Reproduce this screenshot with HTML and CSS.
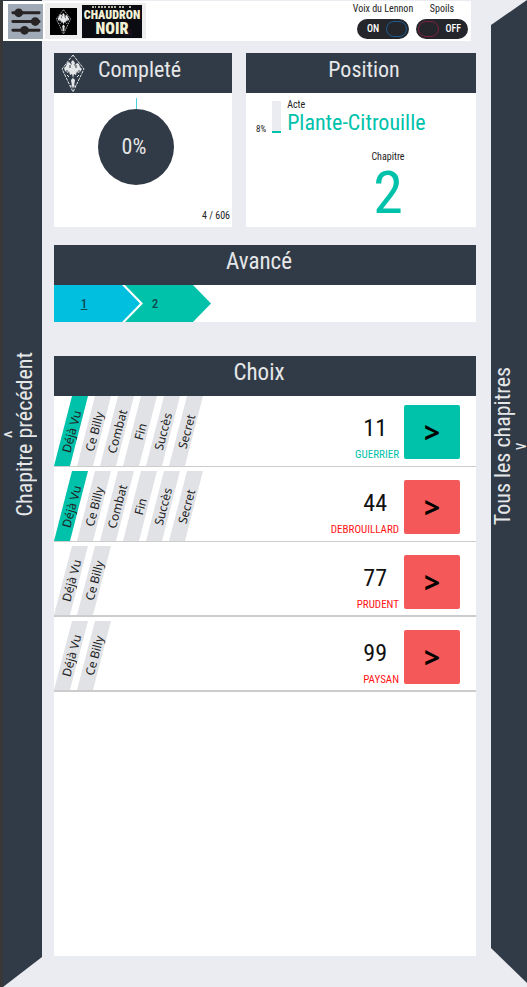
FILE: index.html
```html
<!DOCTYPE html>
<html lang="fr">
<head>
<meta charset="utf-8">
<meta name="viewport" content="width=device-width, initial-scale=1">
<title>Le Chaudron Noir</title>
<link rel="stylesheet" href="styles.css">
</head>
<body>
<div class="page">
  <header class="toolbar">
    <button class="settings" type="button" aria-label="Options">
      <svg viewBox="0 0 36 36" width="35" height="35" aria-hidden="true">
        <g stroke="#282425" stroke-width="3" stroke-linecap="round">
          <path d="M5 9H32M5 18H32M5 27H32"/>
        </g>
        <g fill="#282425"><circle cx="11" cy="9" r="4.5"/><circle cx="28" cy="18" r="4.5"/><circle cx="17" cy="27" r="4.5"/></g>
      </svg>
    </button>
    <div class="books">
      <a href="#dragon" aria-label="Dragon">
        <svg viewBox="0 0 27 27" width="27" height="27" aria-hidden="true">
          <rect width="27" height="27" fill="#000"/>
          <use href="#emblem" x="5" y="0" width="17" height="27"/>
        </svg>
      </a>
      <a class="cover" href="#chaudron">
        <svg viewBox="0 0 60 33" width="60" height="33">
          <rect width="60" height="33" fill="#0b0b12"/>
          <path d="M42 24h8v7h-8z" fill="#17101c"/>
          <path d="M10 2h4m2 0h8m2 0h9m2 0h6m4 0h3" fill="none" stroke="#f3f1d5" stroke-width="1.5" stroke-dasharray="2 1"/>
          <text class="cover-top" x="30" y="14" text-anchor="middle">CHAUDRON</text>
          <text class="cover-bottom" x="30" y="29" text-anchor="middle">NOIR</text>
        </svg>
      </a>
    </div>
    <div class="switches">
      <label class="switch"><span class="switch-label">Voix du Lennon</span>
        <input type="checkbox" role="switch" checked>
        <span class="track"><span class="state">ON</span><span class="knob"></span></span>
      </label>
      <label class="switch"><span class="switch-label">Spoils</span>
        <input type="checkbox" role="switch">
        <span class="track track-off"><span class="knob"></span><span class="state">OFF</span></span>
      </label>
    </div>
  </header>

  <a class="side side-prev" href="#precedent">
    <span class="side-text"><span class="caret caret-prev">^</span><span class="side-label">Chapitre précédent</span></span>
  </a>

  <main class="content">
    <div class="summary">
      <section class="card">
        <h2 class="title title-icon">
          <svg viewBox="0 0 26 40" width="26" height="40" aria-hidden="true">
            <symbol id="emblem" viewBox="0 0 26 40">
              <path d="M13 2 24 16 13 39 2 16Z" fill="none" stroke="#e4e6e8" stroke-width="1" stroke-dasharray="3 1"/>
              <path d="M13 7l2 3-1 3 3-3 2 1 1 3 2 2-2 3-2 1-1-2-1 4-2-1-1 4 2 2-1 6-1 3-1-3-1-6 2-2-1-4-2 1-1-4-1 2-3-2-1-3 2-2 1-3 2-1 3 3-1-3Z" fill="#e4e6e8"/>
              <path d="M10 12v3m6-3v3M7 17v2m12-2v2" stroke="#313b47" stroke-width="1"/>
              <path d="M7 22l2 2m10-2-2 2m-6 8v2m4-2v2" stroke="#e4e6e8" stroke-width="1"/>
            </symbol>
            <use href="#emblem" width="26" height="40"/>
          </svg>
          Completé
        </h2>
        <div class="completion">
          <div class="tick"></div>
          <div class="disc">0%</div>
          <div class="count">4 / 606</div>
        </div>
      </section>

      <section class="card">
        <h2 class="title">Position</h2>
        <div class="position">
          <div class="act">
            <span class="small percent">8%</span>
            <span class="gauge"><span class="gauge-fill"></span></span>
            <div>
              <div class="small">Acte</div>
              <div class="act-name">Plante-Citrouille</div>
            </div>
          </div>
          <div class="chapter">
            <div class="small">Chapitre</div>
            <div class="chapter-number">2</div>
          </div>
        </div>
      </section>
    </div>

    <section class="card progress">
      <h2 class="title title-wide">Avancé</h2>
      <nav class="steps">
        <a class="step step-done" href="#chapitre-1">1</a>
        <span class="step step-current">2</span>
      </nav>
    </section>

    <section class="card choices">
      <h2 class="title title-wide">Choix</h2>
      <ul class="rows">
        <li class="row">
          <div class="tags"><span class="tag tag-on"><span>Déjà Vu</span></span><span class="tag"><span>Ce Billy</span></span><span class="tag"><span>Combat</span></span><span class="tag"><span>Fin</span></span><span class="tag"><span>Succès</span></span><span class="tag"><span>Secret</span></span></div>
          <div class="target"><span class="number">11</span><span class="kind kind-ok">GUERRIER</span></div>
          <button class="go go-ok" type="button" aria-label="Aller au 11">&gt;</button>
        </li>
        <li class="row">
          <div class="tags"><span class="tag tag-on"><span>Déjà Vu</span></span><span class="tag"><span>Ce Billy</span></span><span class="tag"><span>Combat</span></span><span class="tag"><span>Fin</span></span><span class="tag"><span>Succès</span></span><span class="tag"><span>Secret</span></span></div>
          <div class="target"><span class="number">44</span><span class="kind">DEBROUILLARD</span></div>
          <button class="go" type="button" aria-label="Aller au 44">&gt;</button>
        </li>
        <li class="row">
          <div class="tags"><span class="tag"><span>Déjà Vu</span></span><span class="tag"><span>Ce Billy</span></span></div>
          <div class="target"><span class="number">77</span><span class="kind">PRUDENT</span></div>
          <button class="go" type="button" aria-label="Aller au 77">&gt;</button>
        </li>
        <li class="row">
          <div class="tags"><span class="tag"><span>Déjà Vu</span></span><span class="tag"><span>Ce Billy</span></span></div>
          <div class="target"><span class="number">99</span><span class="kind">PAYSAN</span></div>
          <button class="go" type="button" aria-label="Aller au 99">&gt;</button>
        </li>
      </ul>
    </section>
  </main>

  <a class="side side-all" href="#chapitres">
    <span class="side-text"><span class="side-label">Tous les chapitres</span><span class="caret caret-all">v</span></span>
  </a>
</div>
</body>
</html>
```
FILE: styles.css
```css
:root {
  --dark: #313b47;
  --bg: #ebecf1;
  --teal: #00c2ab;
  --light: #e6e7e9;
}
* { box-sizing: border-box; }
body {
  margin: 0;
  background: var(--bg);
  color: #222;
  font-family: "Roboto Condensed", "Liberation Sans Narrow", Roboto, sans-serif;
}
.page {
  display: grid;
  grid-template-columns: 39px 1fr 36px;
  grid-template-rows: 41px 1fr;
  min-height: 100vh;
  border-left: 3px solid #383838;
}

/* Toolbar */
.toolbar {
  z-index: 1;
  grid-area: 1 / 1 / 2 / 3;
  display: flex;
  align-items: center;
  gap: 2px;
  margin: 1px 20px 0 0;
  padding: 0 3px 0 5px;
  background: #fff;
}
.settings { display: flex; padding: 0; border: 0; background: #a0a9b6; }
.books {
  display: flex;
  align-items: center;
  gap: 5px;
  height: 36px;
  padding: 0 4px 0 5px;
  background: #eee;
}
.books a { display: flex; }
.cover text { fill: #f3f1d5; font-weight: 900; }
.cover-top { font-size: 12px; }
.cover-bottom { font-size: 16px; }
.switches { display: flex; gap: 7px; margin-left: auto; }
.switch {
  position: relative;
  display: flex;
  flex-direction: column;
  align-items: center;
  gap: 4px;
  width: 52px;
  font-size: 10px;
  line-height: 12px;
}
.switch-label { white-space: nowrap; }
.switch input { position: absolute; opacity: 0; }
.track {
  display: flex;
  align-items: center;
  justify-content: space-between;
  width: 52px;
  height: 20px;
  padding: 0 2px 0 10px;
  border-radius: 10px;
  background: #25262b;
  color: #fff;
  font-weight: 500;
}
.track-off { padding: 0 7px 0 2px; }
.knob { width: 21px; height: 16px; border: 1px solid #1d5b91; border-radius: 8px; }
.track-off .knob { border-color: #7c213d; }

/* Side panels */
.side {
  display: flex;
  align-items: center;
  background: var(--dark);
  color: var(--light);
  text-decoration: none;
}
.side-text {
  writing-mode: vertical-rl;
  transform: rotate(180deg);
  text-align: center;
  white-space: nowrap;
}
.side-label, .caret { display: block; }
.side-label { font-size: 22px; line-height: 24px; }
.caret-prev { margin-block-end: -10px; font-size: 22px; line-height: 20px; }
.caret-all { font-size: 18px; line-height: 10px; }
.side-prev {
  grid-area: 1 / 1 / 3 / 2;
  padding-bottom: 118px;
  clip-path: polygon(0 0, 100% 0, 100% calc(100% - 30px), 0 100%);
}
.side-all {
  grid-area: 1 / 3 / 3 / 4;
  padding-bottom: 94px;
  clip-path: polygon(0 25px, 100% 0, 100% calc(100% - 4px), 0 calc(100% - 39px));
}

/* Cards */
.content {
  grid-area: 2 / 2;
  display: flex;
  flex-direction: column;
  padding: 12px 15px 31px 12px;
}
.card { background: #fff; }
.title {
  margin: 0;
  height: 40px;
  padding-left: 6px;
  background: var(--dark);
  color: var(--light);
  font-size: 22px;
  font-weight: 400;
  line-height: 34px;
  text-align: center;
}
.title-icon { display: flex; gap: 12px; }
.title-wide { padding: 0 12px 0 0; font-size: 23px; }
.summary { display: grid; grid-template-columns: 178fr 230fr; gap: 14px; }
.completion { display: flex; flex-direction: column; align-items: center; padding: 5px 2px 3px; }
.tick { width: 1px; height: 11px; margin-right: 14px; background: #4cd0e0; }
.disc {
  width: 76px;
  height: 76px;
  margin-right: 14px;
  padding-right: 4px;
  border-radius: 50%;
  background: var(--dark);
  color: var(--light);
  font-size: 22px;
  line-height: 76px;
  text-align: center;
}
.count { align-self: flex-end; margin-top: 24px; font-size: 10px; line-height: 14px; }
.position { padding: 6px 10px 4px; }
.act { display: flex; align-items: center; gap: 6px; }
.small { font-size: 10px; line-height: 12px; }
.percent { align-self: flex-end; font-size: 9px; }
.gauge { display: flex; align-items: flex-end; width: 9px; height: 32px; background: var(--bg); }
.gauge-fill { width: 100%; height: 2px; background: var(--teal); }
.act-name { color: var(--teal); font-size: 22px; line-height: 24px; }
.chapter { width: 60px; margin: 16px 0 0 102px; text-align: center; }
.chapter-number { color: var(--teal); font-size: 60px; line-height: 60px; }

.progress { margin-top: 18px; }
.steps {
  display: flex;
  height: 37px;
  font-size: 13px;
  font-weight: 500;
  line-height: 37px;
  text-align: center;
}
.step { width: 86px; padding-right: 26px; color: #0d4a50; }
.step-done { background: #00bfdf; clip-path: polygon(0 0, 68px 0, 100% 50%, 68px 100%, 0 100%); }
.step-current {
  margin-left: -15px;
  background: var(--teal);
  clip-path: polygon(0 0, 68px 0, 100% 50%, 68px 100%, 0 100%, 18px 50%);
}

/* Choices */
.choices { flex: 1; margin-top: 34px; }
.rows { display: flex; flex-direction: column; gap: 4px; margin: 0; padding: 0; list-style: none; }
.row { display: flex; height: 71px; padding-right: 16px; border-bottom: 1px solid #ccc; }
.row:nth-child(n + 3) { border-bottom-width: 2px; }
.tags { display: flex; margin-right: auto; }
.tag {
  display: flex;
  align-items: center;
  justify-content: center;
  width: 34px;
  margin-right: -11px;
  background: #e1e2e6;
  clip-path: polygon(18px 0, 100% 0, 16px 100%, 0 100%);
  font-family: "Noto Sans", sans-serif;
  font-size: 12px;
}
.tag span { transform: rotate(-75deg); white-space: nowrap; }
.tag-on { background: var(--teal); }
.target { display: flex; flex-direction: column; align-items: flex-end; padding: 18px 5px 0 0; }
.number { padding-right: 12px; color: #111; font-size: 24px; line-height: 28px; }
.kind { color: #ff1515; font-size: 11px; line-height: 26px; }
.kind-ok { color: var(--teal); }
.go {
  width: 56px;
  height: 54px;
  margin-top: 9px;
  padding: 0;
  border: 0;
  border-radius: 2px;
  background: #f45858;
  color: #000;
  font: 700 28px "Noto Sans", sans-serif;
}
.go-ok { background: var(--teal); }
```
